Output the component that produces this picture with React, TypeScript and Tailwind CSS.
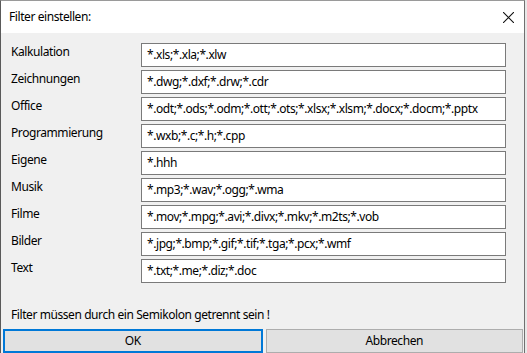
const filters: [string, string][] = [
  ["Kalkulation", "*.xls;*.xla;*.xlw"],
  ["Zeichnungen", "*.dwg;*.dxf;*.drw;*.cdr"],
  ["Office", "*.odt;*.ods;*.odm;*.ott;*.ots;*.xlsx;*.xlsm;*.docx;*.docm;*.pptx"],
  ["Programmierung", "*.wxb;*.c;*.h;*.cpp"],
  ["Eigene", "*.hhh"],
  ["Musik", "*.mp3;*.wav;*.ogg;*.wma"],
  ["Filme", "*.mov;*.mpg;*.avi;*.divx;*.mkv;*.m2ts;*.vob"],
  ["Bilder", "*.jpg;*.bmp;*.gif;*.tif;*.tga;*.pcx;*.wmf"],
  ["Text", "*.txt;*.me;*.diz;*.doc"],
];

export default function App() {
  return (
    <div className="flex h-[353px] w-[527px] overflow-hidden bg-[#e8e8e8] font-['Noto_Sans',sans-serif] text-[12px] tracking-[-0.42px] text-black">
      <div className="flex h-full w-[525px] flex-col border-t border-r border-l border-t-[#9a9a9a] border-r-[#707070] border-l-[#5a5a5a] bg-[#f0f0f0]">
        {/* title bar */}
        <div className="flex h-[32px] shrink-0 items-center justify-between bg-white pr-[10px] pl-[8px]">
          <span className="leading-none">Filter einstellen:</span>
          <svg viewBox="0 0 10 10" className="h-[11px] w-[11px]" fill="none" stroke="#111" strokeWidth="1">
            <path d="M0 0 10 10M10 0 0 10" />
          </svg>
        </div>

        <div className="flex flex-col pt-[10px] pr-[18px] pl-[10px]">
          {filters.map(([label, value]) => (
            <div key={label} className="mb-[3px] flex items-start">
              <span className="w-[130px] shrink-0 pt-[1px] leading-[16px]">{label}</span>
              <div className="flex h-[24px] flex-1 items-center border border-[#7a7a7a] bg-white pl-[5px] leading-none whitespace-nowrap">
                {value}
              </div>
            </div>
          ))}
        </div>

        <div className="mt-auto pl-[10px] leading-[16px]">Filter müssen durch ein Semikolon getrennt sein !</div>

        <div className="mt-[6px] flex gap-[3px] pr-[1px] pl-[2px]">
          <button className="h-[24px] flex-1 border-2 border-[#0078d7] bg-[#e1e1e1] leading-none">OK</button>
          <button className="h-[24px] flex-1 border border-[#adadad] bg-[#e1e1e1] leading-none">Abbrechen</button>
        </div>
      </div>
    </div>
  );
}
